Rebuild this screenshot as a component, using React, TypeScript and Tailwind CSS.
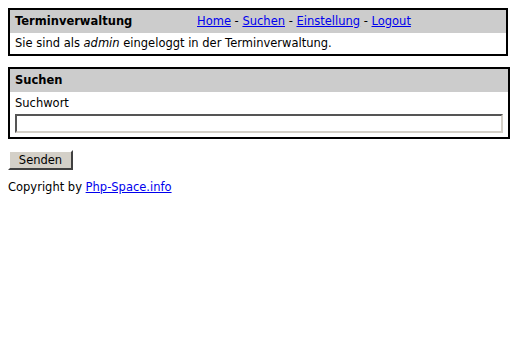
export default function App() {
  const font = { fontFamily: '"DejaVu Sans", Verdana, sans-serif' };
  return (
    <div className="min-h-[340px] bg-white p-2 text-[11.5px] leading-[15px] text-black" style={font}>
      <div className="w-[500px] border-2 border-black">
        <div className="flex h-[23px] items-center bg-[#cccccc] px-[5px]">
          <div className="w-[182px] font-bold">Terminverwaltung</div>
          <div>
            <a href="#" className="text-[#0000ee] underline">Home</a> -{" "}
            <a href="#" className="text-[#0000ee] underline">Suchen</a> -{" "}
            <a href="#" className="text-[#0000ee] underline">Einstellung</a> -{" "}
            <a href="#" className="text-[#0000ee] underline">Logout</a>
          </div>
        </div>
        <div className="flex h-[21px] items-center px-[5px]">
          Sie sind als&nbsp;<i>admin</i>&nbsp;eingeloggt in der Terminverwaltung.
        </div>
      </div>
      <div className="mt-[11px] w-[502px] border-2 border-black">
        <div className="flex h-[23px] items-center bg-[#cccccc] px-[5px] font-bold">Suchen</div>
        <div className="px-[5px] pt-[4px] pb-[4px]">
          <div className="h-[15px]">Suchwort</div>
          <input
            className="mt-[3px] block h-[19px] w-[488px] border-2 border-t-[#555555] border-l-[#555555] border-r-[#d4d0c8] border-b-[#d4d0c8] bg-white outline-none"
            type="text"
          />
        </div>
      </div>
      <button
        className="mt-[11px] block h-[20px] w-[65px] border-2 border-t-white border-l-white border-r-[#404040] border-b-[#404040] bg-[#d4d0c8] text-[11.5px] leading-[13px] text-black"
        style={font}
      >
        Senden
      </button>
      <div className="mt-[10px]">
        Copyright by <a href="#" className="text-[#0000ee] underline">Php-Space.info</a>
      </div>
    </div>
  );
}
